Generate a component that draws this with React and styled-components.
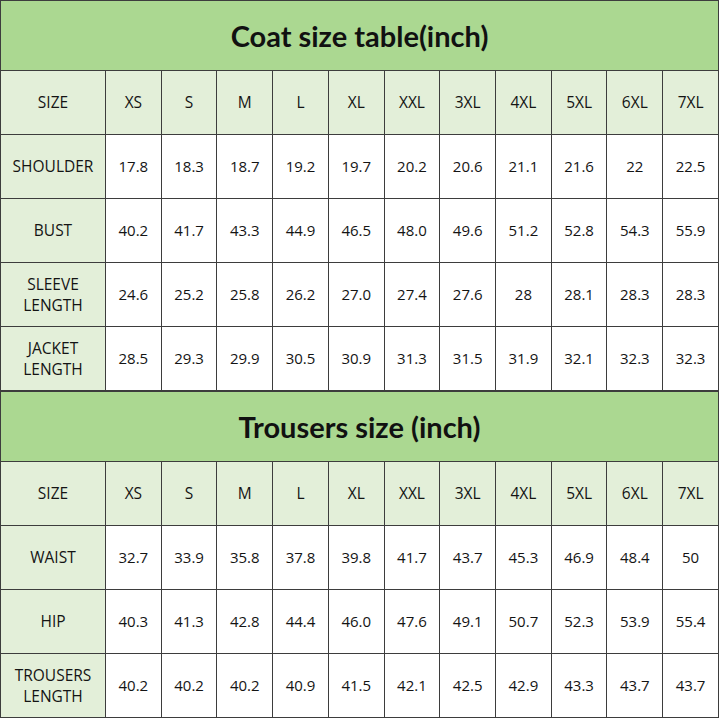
import React from 'react';
import styled, { createGlobalStyle } from 'styled-components';

const GlobalStyle = createGlobalStyle`
  html, body {
    margin: 0;
    padding: 0;
    background: #fff;
  }
`;

const Page = styled.div`
  width: 720px;
  height: 720px;
  overflow: hidden;
  font-family: "Open Sans", "Noto Sans", sans-serif;
  color: #141414;
`;

const Table = styled.table`
  width: 719px;
  border-collapse: collapse;
  table-layout: fixed;
`;

const TitleCell = styled.th`
  height: 69px;
  background: #abd891;
  border: 1.5px solid #3d3d3d;
  font-family: "Lato", "Liberation Sans", sans-serif;
  font-weight: 700;
  font-size: 29px;
  color: #111;
  padding: 0;
`;

const Cell = styled.td`
  height: 63px;
  border: 1.5px solid #3d3d3d;
  text-align: center;
  vertical-align: middle;
  font-size: ${(p) => (p.$shade ? '15.5px' : '15px')};
  line-height: 21px;
  padding: 0;
  background: ${(p) => (p.$shade ? '#e3efd9' : '#fff')};
`;

const coatSizes = ['XS', 'S', 'M', 'L', 'XL', 'XXL', '3XL', '4XL', '5XL', '6XL', '7XL'];

const coatRows = [
  ['SHOULDER', ['17.8', '18.3', '18.7', '19.2', '19.7', '20.2', '20.6', '21.1', '21.6', '22', '22.5']],
  ['BUST', ['40.2', '41.7', '43.3', '44.9', '46.5', '48.0', '49.6', '51.2', '52.8', '54.3', '55.9']],
  ['SLEEVE\nLENGTH', ['24.6', '25.2', '25.8', '26.2', '27.0', '27.4', '27.6', '28', '28.1', '28.3', '28.3']],
  ['JACKET\nLENGTH', ['28.5', '29.3', '29.9', '30.5', '30.9', '31.3', '31.5', '31.9', '32.1', '32.3', '32.3']],
];

const trouserRows = [
  ['WAIST', ['32.7', '33.9', '35.8', '37.8', '39.8', '41.7', '43.7', '45.3', '46.9', '48.4', '50']],
  ['HIP', ['40.3', '41.3', '42.8', '44.4', '46.0', '47.6', '49.1', '50.7', '52.3', '53.9', '55.4']],
  ['TROUSERS\nLENGTH', ['40.2', '40.2', '40.2', '40.9', '41.5', '42.1', '42.5', '42.9', '43.3', '43.7', '43.7']],
];

const Label = ({ text }) =>
  text.split('\n').map((line, i) => (
    <React.Fragment key={i}>
      {i > 0 && <br />}
      {line}
    </React.Fragment>
  ));

const SizeTable = ({ title, rows }) => (
  <Table>
    <colgroup>
      <col style={{ width: 105 }} />
      {coatSizes.map((s) => (
        <col key={s} />
      ))}
    </colgroup>
    <tbody>
      <tr>
        <TitleCell colSpan={12}>{title}</TitleCell>
      </tr>
      <tr>
        <Cell $shade>SIZE</Cell>
        {coatSizes.map((s) => (
          <Cell key={s} $shade>
            {s}
          </Cell>
        ))}
      </tr>
      {rows.map(([name, values]) => (
        <tr key={name}>
          <Cell $shade>
            <Label text={name} />
          </Cell>
          {values.map((v, i) => (
            <Cell key={i}>{v}</Cell>
          ))}
        </tr>
      ))}
    </tbody>
  </Table>
);

export default function App() {
  return (
    <Page>
      <GlobalStyle />
      <SizeTable title="Coat size table(inch)" rows={coatRows} />
      <SizeTable title="Trousers size (inch)" rows={trouserRows} />
    </Page>
  );
}
